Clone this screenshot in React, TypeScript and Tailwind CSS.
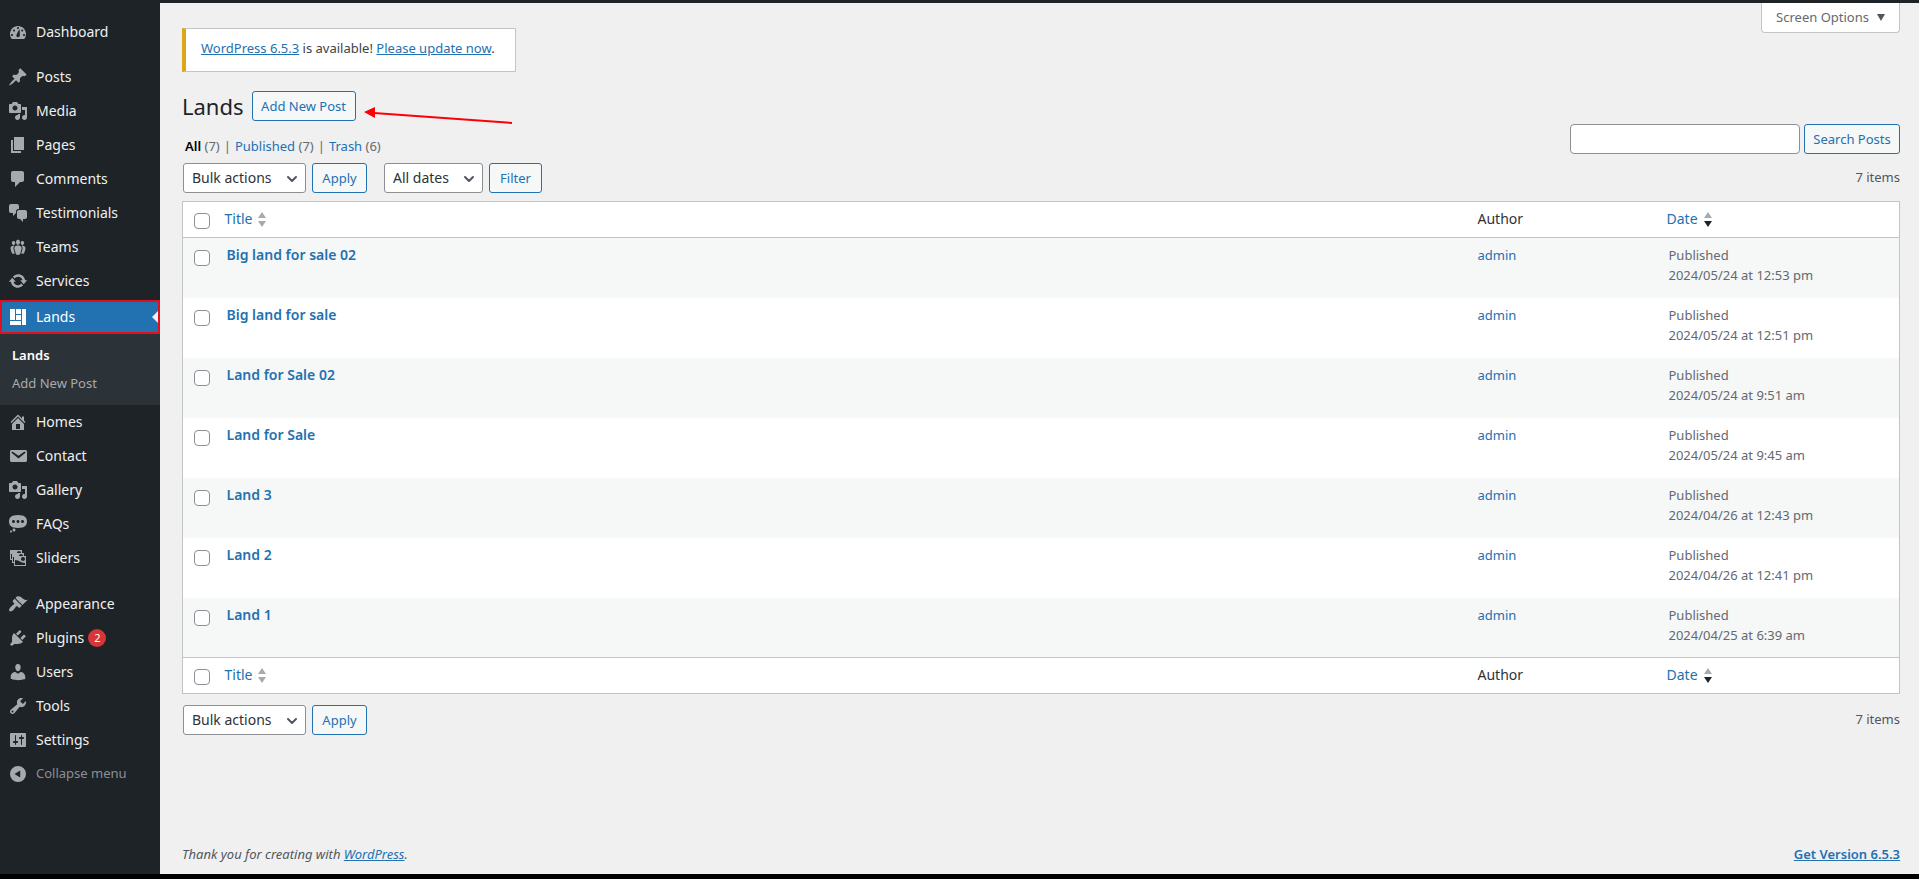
import React from 'react';
import { ChevronDown } from 'lucide-react';

const icons = {
  dashboard:
    'M3.76 17h12.48A7.84 7.84 0 0 0 18 12c0-4.4-3.6-8-8-8s-8 3.6-8 8c0 1.9.66 3.65 1.76 5zM9 6c0-.55.45-1 1-1s1 .45 1 1c0 .56-.45 1-1 1s-1-.44-1-1zM5 8.5c0-.55.45-1 1-1s1 .45 1 1c0 .56-.45 1-1 1s-1-.44-1-1zM8.3 13.6c.1-1.2 3.3-6.6 3.3-6.6s.5 6.2.1 7.2c-.5 1-1.6 1.3-2.5.9-.7-.3-1-.9-.9-1.5zM3 13c0-.55.45-1 1-1s1 .45 1 1c0 .56-.45 1-1 1s-1-.44-1-1zm12 0c0-.55.45-1 1-1s1 .45 1 1c0 .56-.45 1-1 1s-1-.44-1-1zM13.2 8.5c0-.55.45-1 1-1s1 .45 1 1c0 .56-.45 1-1 1s-1-.44-1-1z',
  post: 'M10.44 3.02l1.82-1.82 6.36 6.35-1.83 1.82c-1.05-.68-2.48-.57-3.41.36l-.75.75c-.92.93-1.04 2.35-.35 3.41l-1.83 1.82-2.41-2.41-2.8 2.79c-.42.42-3.38 2.71-3.8 2.29s1.86-3.39 2.28-3.81l2.79-2.79L4.1 9.36l1.83-1.82c1.05.69 2.48.57 3.4-.36l.75-.75c.93-.92 1.05-2.35.36-3.41z',
  media:
    'M13 11V4c0-.55-.45-1-1-1h-1.67L9 1H5L3.67 3H2c-.55 0-1 .45-1 1v7c0 .55.45 1 1 1h10c.55 0 1-.45 1-1zM7 4.5c1.38 0 2.5 1.12 2.5 2.5S8.38 9.5 7 9.5 4.5 8.38 4.5 7 5.62 4.5 7 4.5zM14 6h5v10.5c0 1.38-1.12 2.5-2.5 2.5S14 17.88 14 16.5s1.12-2.5 2.5-2.5c.17 0 .34.02.5.05V9h-3V6zm-4 8.05V13h2v3.5c0 1.38-1.12 2.5-2.5 2.5S7 17.88 7 16.5 8.12 14 9.5 14c.17 0 .34.02.5.05z',
  page: 'M6 15V2h10v13H6zm-1 1h8v2H3V5h2v11z',
  comments: 'M5 2h9c1.1 0 2 .9 2 2v7c0 1.1-.9 2-2 2h-2l-5 5v-5H5c-1.1 0-2-.9-2-2V4c0-1.1.9-2 2-2z',
  chat: 'M11 6h-.82C9.07 6 8 7.2 8 8.16V10l-3 3v-3H3c-1.1 0-2-.9-2-2V3c0-1.1.9-2 2-2h6c1.1 0 2 .9 2 2v3zm0 1h6c1.1 0 2 .9 2 2v5c0 1.1-.9 2-2 2h-2v3l-3-3h-1c-1.1 0-2-.9-2-2V9c0-1.1.9-2 2-2z',
  groups:
    'M8.03 4.46c-.29 1.28.55 3.46 1.97 3.46 1.41 0 2.25-2.18 1.96-3.46-.22-.98-1.08-1.63-1.96-1.63-.89 0-1.74.65-1.97 1.63zm-4.13.9c-.25 1.08.47 2.93 1.67 2.93s1.92-1.85 1.67-2.93c-.19-.83-.92-1.39-1.67-1.39s-1.48.56-1.67 1.39zm8.86 0c-.25 1.08.47 2.93 1.66 2.93 1.2 0 1.92-1.85 1.67-2.93-.19-.83-.92-1.39-1.67-1.39-.74 0-1.47.56-1.66 1.39zm-.59 11.43l1.25-4.3C14.2 10 12.71 8.47 10 8.47c-2.72 0-4.21 1.53-3.44 4.02l1.26 4.3C8.05 17.51 9 18 10 18c.98 0 1.94-.49 2.17-1.21zm-6.1-7.63c-.49.67-.96 1.83-.42 3.59l1.12 3.79c-.34.2-.77.31-1.2.31-.85 0-1.65-.41-1.85-1.03l-1.07-3.65c-.65-2.11.61-3.4 2.92-3.4.27 0 .54.02.79.06-.1.1-.2.22-.29.33zm8.35-.39c2.31 0 3.58 1.29 2.92 3.4l-1.07 3.65c-.2.62-1 1.03-1.85 1.03-.43 0-.86-.11-1.2-.31l1.11-3.77c.55-1.78.08-2.94-.42-3.61-.08-.11-.18-.23-.28-.33.25-.04.51-.06.79-.06z',
  update:
    'M10.2 3.28c3.53 0 6.43 2.61 6.92 6h2.08l-3.5 4-3.5-4h2.32c-.45-1.97-2.21-3.45-4.32-3.45-1.45 0-2.73.71-3.54 1.78L4.95 5.66C6.23 4.2 8.11 3.28 10.2 3.28zm-.4 13.44c-3.52 0-6.43-2.61-6.92-6H.8l3.5-4c1.17 1.33 2.33 2.67 3.5 4H5.48c.45 1.97 2.21 3.45 4.32 3.45 1.45 0 2.73-.71 3.54-1.78l1.71 1.95c-1.28 1.46-3.15 2.38-5.25 2.38z',
  layout: 'M2 2h5v11H2V2zm6 0h5v5H8V2zm6 0h4v16h-4V2zM8 8h5v5H8V8zm-6 6h11v4H2v-4z',
  home: 'M16 8.5l1.53 1.53-1.06 1.06L10 4.6l-6.47 6.49-1.06-1.06L10 2.5l4 4v-2h2v4zm-6-2.46l6 5.99V18H4v-5.97zM12 17v-5H8v5h4z',
  email:
    'M3.87 4h13.25C18.37 4 19 4.59 19 5.79v8.42c0 1.19-.63 1.79-1.88 1.79H3.87c-1.25 0-1.88-.6-1.88-1.79V5.79c0-1.2.63-1.79 1.88-1.79zm6.62 8.6l6.74-5.53c.24-.2.43-.66.13-1.07-.29-.41-.82-.42-1.17-.17l-5.7 3.86L4.8 5.83c-.35-.25-.88-.24-1.17.17-.3.41-.11.87.13 1.07z',
  status:
    'M10 1c7 0 9 2.91 9 6.5S17 14 10 14s-9-2.91-9-6.5S3 1 10 1zM5.5 9C6.33 9 7 8.33 7 7.5S6.33 6 5.5 6 4 6.67 4 7.5 4.67 9 5.5 9zM10 9c.83 0 1.5-.67 1.5-1.5S10.83 6 10 6s-1.5.67-1.5 1.5S9.17 9 10 9zm4.5 0c.83 0 1.5-.67 1.5-1.5S15.33 6 14.5 6 13 6.67 13 7.5 13.67 9 14.5 9zM6 14.5c.83 0 1.5.67 1.5 1.5s-.67 1.5-1.5 1.5-1.5-.67-1.5-1.5.67-1.5 1.5-1.5zm-3 2c.55 0 1 .45 1 1s-.45 1-1 1-1-.45-1-1 .45-1 1-1z',
  images:
    'M4 15v-3H2V2h12v3h2v3h2v10H6v-3H4zm7-12c-1.1 0-2 .9-2 2h4c0-1.1-.89-2-2-2zm-7 8V6H3v5h1zm7-3h4c0-1.1-.89-2-2-2-1.1 0-2 .9-2 2zm-5 6V9H5v5h1zm9-1c1.1 0 2-.89 2-2 0-1.1-.9-2-2-2s-2 .9-2 2c0 1.11.9 2 2 2zm2 4v-2c-5 0-5-3-10-3v5h10z',
  appearance:
    'M14.48 11.06L7.41 3.99l1.5-1.5c.5-.56 2.3-.47 3.51.32 1.21.8 1.43 1.28 2.91 2.1 1.18.64 2.45 1.26 4.45.85zm-.71.71L6.7 4.7 4.93 6.47c-.39.39-.39 1.02 0 1.41l1.06 1.06c.39.39.39 1.03 0 1.42-.6.6-1.43 1.11-2.21 1.69-.35.26-.7.53-1.01.84C1.43 14.23.4 16.08 1.4 17.07c.99 1 2.84-.03 4.18-1.36.31-.31.58-.66.85-1.02.57-.78 1.08-1.61 1.69-2.21.39-.39 1.02-.39 1.41 0l1.06 1.06c.39.39 1.02.39 1.41 0z',
  plugins:
    'M13.11 4.36L9.87 7.6 8 5.73l3.24-3.24c.35-.34 1.05-.2 1.56.32.52.51.66 1.21.31 1.55zm-8 1.77l.91-1.12 9.01 9.01-1.19.84c-.71.71-2.63 1.16-3.82 1.16H6.14L4.9 17.26c-.59.59-1.54.59-2.12 0-.59-.58-.59-1.53 0-2.12l1.24-1.24v-3.88c0-1.13.4-3.19 1.09-3.89zm7.26 3.97l3.24-3.24c.34-.35 1.04-.21 1.55.31.52.51.66 1.21.31 1.55l-3.24 3.25z',
  users:
    'M10 9.25c-2.27 0-2.73-3.44-2.73-3.44C7 4.02 7.82 2 9.97 2c2.16 0 2.98 2.02 2.71 3.81 0 0-.41 3.44-2.68 3.44zm0 2.57L12.72 10c2.39 0 4.52 2.33 4.52 4.53v2.49s-3.65 1.13-7.24 1.13c-3.65 0-7.24-1.13-7.24-1.13v-2.49c0-2.25 1.94-4.48 4.47-4.48z',
  tools:
    'M16.68 9.77a4.543 4.543 0 0 1-4.95.99l-5.41 6.52c-.99.99-2.59.99-3.58 0s-.99-2.59 0-3.57l6.52-5.42c-.68-1.65-.35-3.61.99-4.95 1.28-1.28 3.12-1.62 4.72-1.06l-2.89 2.89 2.82 2.82 2.86-2.87c.53 1.58.18 3.39-1.08 4.65zM3.81 16.21c.4.39 1.04.39 1.43 0 .4-.4.4-1.04 0-1.43-.39-.4-1.03-.4-1.43 0-.39.39-.39 1.03 0 1.43z',
  settings:
    'M18 16V4c0-.55-.45-1-1-1H3c-.55 0-1 .45-1 1v12c0 .55.45 1 1 1h14c.55 0 1-.45 1-1zM8 11h1c.55 0 1 .45 1 1s-.45 1-1 1H8v1.5c0 .28-.22.5-.5.5s-.5-.22-.5-.5V13H6c-.55 0-1-.45-1-1s.45-1 1-1h1V5.5c0-.28.22-.5.5-.5s.5.22.5.5V11zm5-2h-1c-.55 0-1-.45-1-1s.45-1 1-1h1V5.5c0-.28.22-.5.5-.5s.5.22.5.5V7h1c.55 0 1 .45 1 1s-.45 1-1 1h-1v5.5c0 .28-.22.5-.5.5s-.5-.22-.5-.5V9z',
  collapse: 'M10 2a8 8 0 1 0 0 16 8 8 0 0 0 0-16zm2.2 4.5v7L6.5 10z',
};

type IconName = keyof typeof icons;

type MenuItem = { label: string; icon: IconName; count?: number };

const topMenu: MenuItem[] = [
  { label: 'Posts', icon: 'post' },
  { label: 'Media', icon: 'media' },
  { label: 'Pages', icon: 'page' },
  { label: 'Comments', icon: 'comments' },
  { label: 'Testimonials', icon: 'chat' },
  { label: 'Teams', icon: 'groups' },
  { label: 'Services', icon: 'update' },
];

const contentMenu: MenuItem[] = [
  { label: 'Homes', icon: 'home' },
  { label: 'Contact', icon: 'email' },
  { label: 'Gallery', icon: 'media' },
  { label: 'FAQs', icon: 'status' },
  { label: 'Sliders', icon: 'images' },
];

const adminMenu: MenuItem[] = [
  { label: 'Appearance', icon: 'appearance' },
  { label: 'Plugins', icon: 'plugins', count: 2 },
  { label: 'Users', icon: 'users' },
  { label: 'Tools', icon: 'tools' },
  { label: 'Settings', icon: 'settings' },
];

const posts = [
  { title: 'Big land for sale 02', date: '2024/05/24 at 12:53 pm' },
  { title: 'Big land for sale', date: '2024/05/24 at 12:51 pm' },
  { title: 'Land for Sale 02', date: '2024/05/24 at 9:51 am' },
  { title: 'Land for Sale', date: '2024/05/24 at 9:45 am' },
  { title: 'Land 3', date: '2024/04/26 at 12:43 pm' },
  { title: 'Land 2', date: '2024/04/26 at 12:41 pm' },
  { title: 'Land 1', date: '2024/04/25 at 6:39 am' },
];

function Icon({ name }: { name: IconName }) {
  return (
    <svg viewBox="0 0 20 20" className="size-5 shrink-0" fill="currentColor" fillRule="evenodd" aria-hidden="true">
      <path d={icons[name]} />
    </svg>
  );
}

function MenuLink({ item }: { item: MenuItem }) {
  return (
    <li>
      <a href="#" className="flex h-[34px] items-center gap-2 pl-2 text-[#a7aaad]">
        <Icon name={item.icon} />
        <span className="pb-px text-[#f0f0f1]">{item.label}</span>
        {item.count && (
          <span className="-ml-1 flex size-[18px] items-center justify-center rounded-full bg-[#d63638] text-[11px] text-white">
            {item.count}
          </span>
        )}
      </a>
    </li>
  );
}

function Sidebar() {
  return (
    <nav className="w-40 shrink-0 bg-[#1d2327] pt-3 text-[14px]">
      <ul>
        <MenuLink item={{ label: 'Dashboard', icon: 'dashboard' }} />
      </ul>
      <ul className="mt-[11px]">
        {topMenu.map((item) => (
          <MenuLink key={item.label} item={item} />
        ))}
      </ul>
      <div className="mt-0.5">
        <a
          href="#"
          className="relative flex h-[34px] items-center gap-2 border-2 border-[#e3101c] bg-[#2271b1] pl-1.5 text-white"
        >
          <Icon name="layout" />
          <span className="pb-px">Lands</span>
          <span className="absolute right-0 border-y-6 border-r-6 border-y-transparent border-r-[#f0f0f1]" />
        </a>
        <ul className="flex h-[71px] flex-col gap-2 bg-[#2c3338] pt-[11px] pl-3 text-[13px] leading-5">
          <li>
            <a href="#" className="font-semibold text-white">Lands</a>
          </li>
          <li>
            <a href="#" className="text-[#a7aaad]">Add New Post</a>
          </li>
        </ul>
      </div>
      <ul>
        {contentMenu.map((item) => (
          <MenuLink key={item.label} item={item} />
        ))}
      </ul>
      <ul className="mt-3">
        {adminMenu.map((item) => (
          <MenuLink key={item.label} item={item} />
        ))}
      </ul>
      <button type="button" className="flex h-[34px] items-center gap-2 pl-2 text-[13px] text-[#a7aaad]">
        <Icon name="collapse" />
        <span className="text-[#8c8f94]">Collapse menu</span>
      </button>
    </nav>
  );
}

function Button({ children, className = '' }: { children: React.ReactNode; className?: string }) {
  return (
    <button
      type="button"
      className={`h-[30px] rounded-[3px] border border-[#2271b1] bg-[#f6f7f7] pt-0.5 text-[13px] text-[#2271b1] ${className}`}
    >
      {children}
    </button>
  );
}

function Select({ label, option, className }: { label: string; option: string; className: string }) {
  return (
    <div className={`relative ${className}`}>
      <select
        aria-label={label}
        className="h-[30px] w-full appearance-none rounded-[3px] border border-[#8c8f94] bg-white pr-6 pb-0.5 pl-2 text-[14px] text-[#2c3338]"
      >
        <option>{option}</option>
      </select>
      <ChevronDown className="pointer-events-none absolute top-2 right-1.5 size-4 text-[#50575e]" strokeWidth={3} />
    </div>
  );
}

function BulkActions() {
  return (
    <>
      <Select label="Select bulk action" option="Bulk actions" className="w-[123px]" />
      <Button className="w-[55px]">Apply</Button>
    </>
  );
}

function Checkbox({ label }: { label: string }) {
  return (
    <input
      type="checkbox"
      aria-label={label}
      className="block size-4 appearance-none rounded-[4px] border border-[#8c8f94] bg-white"
    />
  );
}

function SortArrows({ active = false }: { active?: boolean }) {
  return (
    <svg viewBox="0 0 8 15" className="mt-0.5 h-[15px] w-2" aria-hidden="true">
      <path d="M4 0l4 6H0z" fill="#a7aaad" />
      <path d="M4 15L0 9h8z" fill={active ? '#1d2327' : '#a7aaad'} />
    </svg>
  );
}

function HeadingRow() {
  return (
    <tr className="h-9 bg-white text-left text-[14px] text-[#2c3338]">
      <td className="w-[34px] pt-0.5 pl-[11px]">
        <Checkbox label="Select All" />
      </td>
      <th className="px-2 pb-0.5 font-normal">
        <a href="#" className="flex items-center gap-1.5 text-[#2271b1]">
          Title <SortArrows />
        </a>
      </th>
      <th className="w-[189px] px-2 pb-0.5 font-normal">Author</th>
      <th className="w-[241px] px-2 pb-0.5 font-normal">
        <a href="#" className="flex items-center gap-1.5 text-[#2271b1]">
          Date <SortArrows active />
        </a>
      </th>
    </tr>
  );
}

function PostsTable() {
  return (
    <table className="mt-2 w-full table-fixed border-collapse border border-[#c3c4c7] bg-white">
      <thead className="border-b border-[#c3c4c7]">
        <HeadingRow />
      </thead>
      <tbody className="text-[13px] leading-5 text-[#646970]">
        {posts.map((post) => (
          <tr key={post.title} className="h-[60px] align-top odd:bg-[#f6f7f7]">
            <td className="pt-3 pl-[11px]">
              <Checkbox label={`Select ${post.title}`} />
            </td>
            <td className="px-2.5 pt-[7px]">
              <a href="#" className="text-[14px] font-semibold text-[#2271b1]">{post.title}</a>
            </td>
            <td className="px-2 pt-[7px]">
              <a href="#" className="text-[#2271b1]">admin</a>
            </td>
            <td className="px-2.5 pt-[7px]">
              Published
              <br />
              {post.date}
            </td>
          </tr>
        ))}
      </tbody>
      <tfoot className="border-t border-[#c3c4c7]">
        <HeadingRow />
      </tfoot>
    </table>
  );
}

export default function App() {
  return (
    <div className="flex min-h-screen flex-col bg-[#f0f0f1] font-['Noto_Sans',sans-serif] text-[13px] text-[#3c434a]">
      <div className="h-[3px] bg-[#1d2327]" />
      <div className="flex flex-1">
        <Sidebar />
        <main className="flex min-w-0 flex-1 flex-col pr-[19px] pl-[22px]">
          <div className="flex items-start justify-between">
            <div className="mt-[25px] flex h-11 items-center border border-l-4 border-[#c3c4c7] border-l-[#dba617] bg-white pr-5 pb-0.5 pl-[15px]">
              <p>
                <a href="#" className="text-[#2271b1] underline">WordPress 6.5.3</a> is available!{' '}
                <a href="#" className="text-[#2271b1] underline">Please update now</a>.
              </p>
            </div>
            <button
              type="button"
              className="flex h-[30px] items-center gap-2 rounded-b-[4px] border border-t-0 border-[#c3c4c7] bg-white px-3.5 text-[#646970]"
            >
              Screen Options
              <svg viewBox="0 0 8 7" className="h-[7px] w-2" aria-hidden="true">
                <path d="M0 0h8L4 7z" fill="#50575e" />
              </svg>
            </button>
          </div>

          <div className="mt-[19px] flex h-[30px] items-center gap-2">
            <h1 className="text-[22px] text-[#1d2327]">Lands</h1>
            <Button className="w-[104px] whitespace-nowrap">Add New Post</Button>
            {/* Pointer to the add button */}
            <svg viewBox="0 0 150 36" className="h-9 w-[150px] self-start" aria-hidden="true">
              <path d="M10 22l138 10" stroke="#fb0007" strokeWidth="2" />
              <path d="M0 21l11-5v11z" fill="#fb0007" />
            </svg>
          </div>

          <div className="mt-[3px] flex items-start justify-between">
            <ul className="flex gap-1 pt-3 pl-[3px] leading-5 text-[#646970]">
              <li><a href="#" className="font-semibold text-black">All</a> (7)</li>
              <li>|</li>
              <li><a href="#" className="text-[#2271b1]">Published</a> (7)</li>
              <li>|</li>
              <li><a href="#" className="text-[#2271b1]">Trash</a> (6)</li>
            </ul>
            <form className="flex gap-1">
              <input
                type="search"
                aria-label="Search Posts"
                className="h-[30px] w-[230px] rounded-[4px] border border-[#8c8f94] bg-white px-2"
              />
              <Button className="w-24 whitespace-nowrap">Search Posts</Button>
            </form>
          </div>

          <div className="mt-[7px] flex items-center gap-1.5 pl-px">
            <BulkActions />
            <Select label="Filter by date" option="All dates" className="ml-[11px] w-[99px]" />
            <Button className="w-[53px]">Filter</Button>
            <span className="ml-auto text-[#50575e]">7 items</span>
          </div>

          <PostsTable />

          <div className="mt-[11px] flex items-center gap-1.5 pl-px">
            <BulkActions />
            <span className="ml-auto text-[#50575e]">7 items</span>
          </div>

          <footer className="mt-auto flex justify-between pb-2.5 leading-5 text-[#50575e]">
            <p className="italic">
              Thank you for creating with <a href="#" className="text-[#2271b1] underline">WordPress</a>.
            </p>
            <a href="#" className="font-semibold text-[#2271b1] underline">Get Version 6.5.3</a>
          </footer>
        </main>
      </div>
      <div className="h-[5px] bg-black" />
    </div>
  );
}
